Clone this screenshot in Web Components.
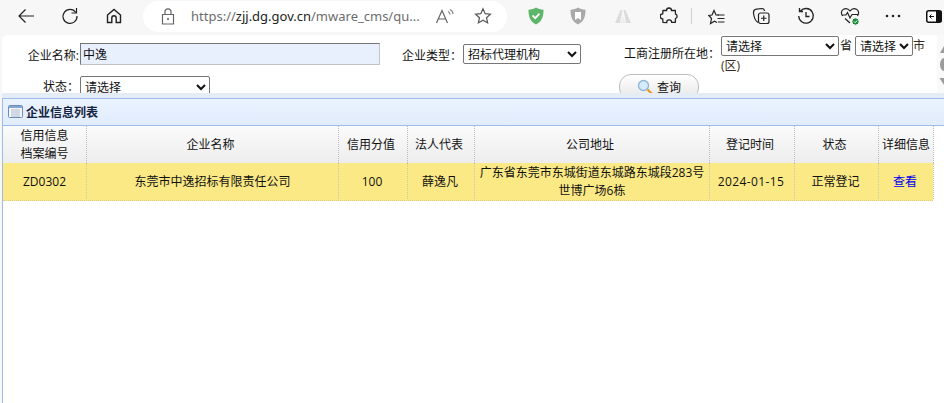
<!DOCTYPE html>
<html lang="zh">
<head>
<meta charset="utf-8">
<title>企业信息列表</title>
<style>
html, body { margin: 0; height: 100%; background: #f7f7f7; overflow: hidden; }
body { font: 12px/18px "Open Sans", "Noto Sans CJK SC", sans-serif; color: #111; display: flex; flex-direction: column; }
</style>
</head>
<body>
<browser-bar></browser-bar>
<page-frame>
  <search-form></search-form>
  <list-panel title-text="企业信息列表"></list-panel>
</page-frame>

<script>
const icon = (w, h, body, style = "") =>
  `<svg width="${w}" height="${h}" viewBox="0 0 ${w} ${h}" fill="none" stroke="#222" stroke-width="1.2" style="${style}">${body}</svg>`;

const barTemplate = document.createElement("template");
barTemplate.innerHTML = `\
<style>
:host { display: flex; height: 35px; box-sizing: border-box; padding-bottom: 3px; flex: none; align-items: center; background: #f7f7f7; position: relative; }
.btn { width: 22px; height: 22px; display: flex; align-items: center; justify-content: center; flex: none; }
.address {
  width: 364px; height: 31px; background: #fff; border-radius: 16px;
  display: flex; align-items: center; flex: none; box-sizing: border-box; padding-left: 18px;
  font: 13px "Noto Sans", sans-serif; color: #6d6d6d;
}
.url { margin-left: 16px; width: 244px; white-space: nowrap; }
.url b { font-weight: 400; color: #222; }
.sep { width: 1px; height: 16px; background: #d0d0d0; flex: none; }
</style>
<span class="btn" style="margin-left:15px">${icon(18, 16, '<path d="M17 8H2M8.500 1.500 2 8l6.500 6.500"/>')}</span>
<span class="btn" style="margin-left:22px">${icon(18, 18, '<path d="M14.800 5.500A7 7 0 1 0 16 9"/><path d="M15.500 1v5h-5"/>')}</span>
<span class="btn" style="margin-left:22px">${icon(16, 16, '<path d="M1.500 7 8 1.500 14.500 7v7.500h-4.300V10a2.200 2.200 0 0 0-4.400 0v4.500H1.500z"/>', "stroke-width:1.400")}</span>
<div class="address" style="margin-left:18px">
  ${icon(14, 17, '<path d="M1.500 6.500h11v9.500h-11zM4 6.500V3.800a3 3 0 0 1 6 0v2.700"/><circle cx="7" cy="11" r="1" fill="#555" stroke="none"/>', "stroke:#666")}
  <span class="url">https://<b>zjj.dg.gov.cn</b>/mware_cms/qu...</span>
  ${icon(20, 17, '<path d="M1.500 15 7 2.500 12.500 15M3.500 11h7" stroke="#666"/><path d="M13 3.500c1.500.8 2 1.800 2 3M15 1.500c2 1 3 2.800 3 4.500" stroke="#888"/>')}
  ${icon(18, 18, '<path d="M9 1.800l2.200 4.900 5.200.5-3.900 3.500 1.100 5.200L9 13.200l-4.600 2.700 1.100-5.200L1.600 7.200l5.200-.5z" stroke="#555"/>', "margin-left:19px")}
</div>
<span class="btn" style="margin-left:18px">
  <svg width="16" height="18" viewBox="0 0 16 18"><path d="M8 .5c2.300 1.500 4.500 2 7.500 2.300 0 7.500-1.800 11.700-7.500 14.700C2.300 14.500.5 10.300.5 2.800 3.500 2.500 5.700 2 8 .5z" fill="#5cb568"/><path d="M4.500 8.500l2.700 2.700 4.300-4.500" stroke="#fff" stroke-width="1.800" fill="none"/></svg>
</span>
<span class="btn" style="margin-left:20px">
  <svg width="16" height="18" viewBox="0 0 16 18"><path d="M8 .5c2.300 1.500 4.500 2 7.500 2.300 0 7.500-1.800 11.700-7.500 14.700C2.300 14.500.5 10.300.5 2.800 3.500 2.500 5.700 2 8 .5z" fill="#a9a9a9"/><path d="M5 5h6v8l-3-2-3 2z" fill="#fff"/></svg>
</span>
<span class="btn" style="margin-left:23px">
  <svg width="16" height="14" viewBox="0 0 16 14"><path d="M0 14 5.500 1h2L5 14zM16 14 10.500 1h-2L11 14z" fill="#dcdcdc"/><path d="M5.500 14 8 7l2.500 7z" fill="#ededed"/></svg>
</span>
<span class="btn" style="margin-left:24px">${icon(18, 18, '<path d="M6.500 3.500a2.500 2.500 0 0 1 5 0h3.800l.2 3.600a2.300 2.300 0 0 1 0 4.400l-.2 3.800h-3.600a2.500 2.500 0 0 0-5 .3L3 15.400l-.3-3.600a2.400 2.400 0 0 1 0-5L3 3.500z"/>', "stroke-width:1.300")}</span>
<span class="sep" style="margin-left:11px"></span>
<span class="btn" style="margin-left:14px">${icon(18, 17, '<path d="M11 7H8L6 2.500 4 7 .8 7.400 3.500 10.500 2.500 15.500 6.500 13.200 9 14.500"/><path d="M9.500 7h7M9.500 10.500h7M10 14h6.500"/>')}</span>
<span class="btn" style="margin-left:22px">${icon(18, 18, '<path d="M6 15.500C3.500 14 2 11 1.500 6c-.2-2 1-3.500 3-3.800L10 1.500c1.500 0 2.300 1 2.500 2.500"/><rect x="6.500" y="6" width="10.500" height="10.500" rx="2"/><path d="M11.750 8.500v5.500M9 11.250h5.500"/>')}</span>
<span class="btn" style="margin-left:23px">${icon(18, 18, '<path d="M3.500 4A7.300 7.300 0 1 1 1.700 9"/><path d="M2.500 1v3.500H6M9 5v4.500h3.500"/>', "stroke-width:1.300")}</span>
<span class="btn" style="margin-left:22px">
  <svg width="20" height="20" viewBox="0 0 20 20" fill="none" stroke="#222" stroke-width="1.200"><path d="M2.500 10C.8 7.500 1 4.500 3.500 3.200 5.800 2 8.300 2.700 10 5c1.700-2.300 4.200-3 6.500-1.800 2.500 1.300 2.700 4.300 1 6.800M1.500 9H6l1.500-2.500L10 12l2-3.500h6M5 12.500 10 17"/><circle cx="15.500" cy="15.500" r="3.700" fill="#1e8a3e" stroke="#fff" stroke-width="1"/><path d="M14 15.500l1.200 1.200 2-2.200" stroke="#fff" stroke-width="1"/></svg>
</span>
<span class="btn" style="margin-left:21px">
  <svg width="16" height="4" viewBox="0 0 16 4" fill="#222"><circle cx="2" cy="2" r="1.300"/><circle cx="8" cy="2" r="1.300"/><circle cx="14" cy="2" r="1.300"/></svg>
</span>
<span class="btn" style="margin-left:19px">
  <svg width="16" height="13" viewBox="0 0 16 13"><rect x=".75" y=".75" width="14.500" height="11.500" rx="2" fill="#fff" stroke="#111" stroke-width="1.500"/><path d="M10 1h4.500q1 0 1 1v9q0 1-1 1H10z" fill="#111"/><path d="M8 6.500H3.500M5.500 4.500l-2 2 2 2" stroke="#111" fill="none"/></svg>
</span>
`;

class BrowserBar extends HTMLElement {
  constructor() {
    super();
    this.attachShadow({ mode: "open" });
    this.shadowRoot.appendChild(barTemplate.content.cloneNode(true));
  }
}
customElements.define("browser-bar", BrowserBar);

const frameTemplate = document.createElement("template");
frameTemplate.innerHTML = `\
<style>
:host { display: flex; flex-direction: column; flex: 1; min-height: 0; background: #fff; margin-left: 2px; border-top-left-radius: 6px; overflow: hidden; }
</style>
<slot></slot>
`;

class PageFrame extends HTMLElement {
  constructor() {
    super();
    this.attachShadow({ mode: "open" });
    this.shadowRoot.appendChild(frameTemplate.content.cloneNode(true));
  }
}
customElements.define("page-frame", PageFrame);

const selectTemplate = document.createElement("template");
selectTemplate.innerHTML = `\
<style>
:host { display: inline-block; }
select {
  display: block; width: 100%; height: 100%; box-sizing: border-box; margin: 0;
  font: 12px "Open Sans", "Noto Sans CJK SC", sans-serif; color: #111; background: #fff;
  border: 1px solid #767676; border-radius: 2px; padding: 0;
}
</style>
<select></select>
`;

class PickField extends HTMLElement {
  constructor() {
    super();
    this.attachShadow({ mode: "open" });
    this.shadowRoot.appendChild(selectTemplate.content.cloneNode(true));
    const option = document.createElement("option");
    option.textContent = this.getAttribute("value");
    this.shadowRoot.querySelector("select").appendChild(option);
  }
}
customElements.define("pick-field", PickField);

// 下の行はリストパネルの帯に隠れる
const formTemplate = document.createElement("template");
formTemplate.innerHTML = `\
<style>
:host { display: block; height: 58px; flex: none; background: #fff; position: relative; }
.rows { display: grid; grid-template-columns: 77px 322px 61px 161px 97px 1fr; grid-template-rows: 40px 24px; }
.label { text-align: right; align-self: center; white-space: nowrap; }
.r1 { padding-top: 1px; }
.r2 { line-height: 12px; }
input {
  width: 300px; height: 22px; box-sizing: border-box; margin: 8px 0 0 1px; padding: 0 2px;
  font: 12px "Open Sans", "Noto Sans CJK SC", sans-serif; color: #111;
  background: #e8f0fe; border: 1px solid; border-color: #767676 #c3c3c3 #c3c3c3 #767676;
}
.type { width: 118px; height: 20px; margin-top: 9px; }
.place { padding: 1px 0 0 1px; line-height: 19px; color: #222; }
.place pick-field { height: 20px; vertical-align: top; }
.p1 { width: 118px; }
.p2 { width: 58px; margin-left: 3px; }
.status { width: 130px; height: 22px; margin: 1px 0 0 1px; }
.loc { align-self: start; margin-top: 9px; height: 20px; line-height: 20px; }
.query {
  margin: -1px 0 0 -4px; width: 80px; height: 26px; box-sizing: border-box;
  border: 1px solid #bdbdbd; border-radius: 12px; background: linear-gradient(#fff, #e6e6e6);
  display: flex; align-items: center; justify-content: center; gap: 4px; color: #111; padding: 0;
}
.query span { font: 12px/12px "Noto Sans CJK SC", sans-serif; }
.arrows { position: absolute; right: 0; top: 0; width: 7px; height: 58px; background: #f9f9f9; }
</style>
<div class="rows">
  <div class="label r1">企业名称:</div>
  <div><input value="中逸"></div>
  <div class="label r1">企业类型：</div>
  <div style="padding-left:1px"><pick-field class="type" value="招标代理机构"></pick-field></div>
  <div class="label loc">工商注册所在地：</div>
  <div class="place"><pick-field class="p1" value="请选择"></pick-field><span style="margin-left:1px">省</span><pick-field class="p2" value="请选择"></pick-field><span style="color:#3a2a20">市</span><br><span style="color:#3a2a20">(区)</span></div>
  <div class="label r2">状态：</div>
  <div><pick-field class="status" value="请选择"></pick-field></div>
  <div></div><div></div>
  <button class="query">
    <svg width="16" height="16" viewBox="0 0 16 16"><circle cx="6.500" cy="6.500" r="5" fill="#d5ebfb" stroke="#8db6d8" stroke-width="1.300"/><path d="M10.500 10.500 15 15" stroke="#e59b2e" stroke-width="2.400"/></svg>
    <span>查询</span>
  </button>
</div>
<div class="arrows">
  <svg width="7" height="58" viewBox="0 0 7 58" fill="#9c9c9c"><path d="M7 11 3 18h4z"/><ellipse cx="7" cy="29.500" rx="4" ry="6.500"/><path d="M2.500 43H7v7z"/></svg>
</div>
`;

class SearchForm extends HTMLElement {
  constructor() {
    super();
    this.attachShadow({ mode: "open" });
    this.shadowRoot.appendChild(formTemplate.content.cloneNode(true));
  }
}
customElements.define("search-form", SearchForm);

const panelTemplate = document.createElement("template");
panelTemplate.innerHTML = `\
<style>
:host { display: flex; flex-direction: column; flex: 1; min-height: 0; border-top: 5px solid #e4ecf5; position: relative; z-index: 1; background: #fff; }
.wrap { flex: 1; border-left: 1px solid #9dbcea; display: flex; flex-direction: column; }
.head {
  height: 28px; flex: none; box-sizing: border-box; display: flex; align-items: center; gap: 3px; padding-left: 5px;
  border-top: 1px solid #9dbcea; border-bottom: 1px solid #9dbcea;
  background: linear-gradient(#eaf2fe, #e1ecfd); font-weight: 700; color: #14233f;
}
.head svg { margin-top: -1px; }
#title { padding-top: 1px; }
</style>
<div class="wrap">
  <div class="head">
    <svg width="15" height="13" viewBox="0 0 15 13"><rect x=".5" y=".5" width="14" height="12" rx="1" fill="#f4f7fb" stroke="#6c8cbc"/><rect x="1" y="1" width="13" height="2" fill="#86a5d2"/><path d="M3 5h9M3 7h9M3 9h9M3 11h9" stroke="#a9b9d0"/></svg>
    <span id="title"></span>
  </div>
  <data-grid></data-grid>
</div>
`;

class ListPanel extends HTMLElement {
  constructor() {
    super();
    this.attachShadow({ mode: "open" });
    this.shadowRoot.appendChild(panelTemplate.content.cloneNode(true));
    this.shadowRoot.querySelector("#title").textContent = this.getAttribute("title-text");
  }
}
customElements.define("list-panel", ListPanel);

const gridTemplate = document.createElement("template");
gridTemplate.innerHTML = `\
<style>
:host { display: block; width: 930px; }
.row { display: grid; grid-template-columns: 84px 252px 69px 67px 235px 85px 84px 55px; }
.row > div {
  display: flex; align-items: center; justify-content: center; text-align: center;
  box-sizing: border-box; border-right: 1px dotted #bbb; line-height: 18px; padding-right: 4px;
}
.th { height: 37px; background: linear-gradient(#fbfbfb, #ededed); }
.th > div { height: 37px; padding-top: 1px; }
.td { height: 37px; background: #fbe986; border-bottom: 1px dotted #d8cf8e; }
.td > div { height: 36px; padding-top: 2px; border-right-color: #c9c9b0; padding-right: 2px; }
.row > .wide { padding-right: 0; }
.date { letter-spacing: .4px; }
a { color: #0000ee; text-decoration: none; }
</style>
<div class="row th">
  <div class="wide">信用信息<br>档案编号</div><div>企业名称</div><div>信用分值</div><div>法人代表</div>
  <div>公司地址</div><div>登记时间</div><div>状态</div><div class="wide">详细信息</div>
</div>
<div class="row td">
  <div class="wide">ZD0302</div><div class="wide">东莞市中逸招标有限责任公司</div><div>100</div><div>薛逸凡</div>
  <div class="wide">广东省东莞市东城街道东城路东城段283号<br>世博广场6栋</div><div class="date">2024-01-15</div><div>正常登记</div><div><a href="#">查看</a></div>
</div>
`;

class DataGrid extends HTMLElement {
  constructor() {
    super();
    this.attachShadow({ mode: "open" });
    this.shadowRoot.appendChild(gridTemplate.content.cloneNode(true));
  }
}
customElements.define("data-grid", DataGrid);
</script>
</body>
</html>
